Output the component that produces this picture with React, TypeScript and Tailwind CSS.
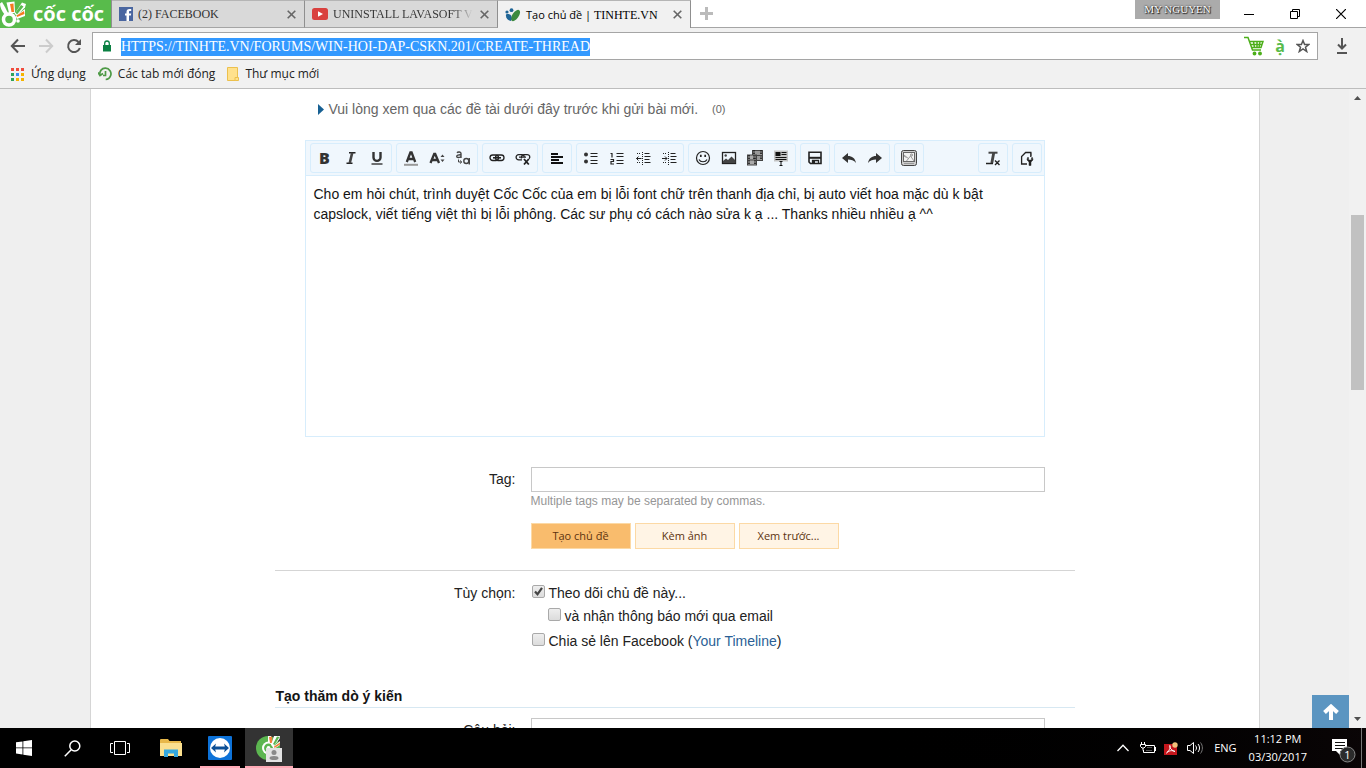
import React from 'react';

const iconProps = {
    width: 18,
    height: 18,
    viewBox: '0 0 18 18',
    fill: 'none',
    stroke: '#222',
    'aria-hidden': true,
};

const icons: Record<string, React.ReactNode> = {
    bold: <span className="font-['Open_Sans',sans-serif] text-[16px] font-extrabold">B</span>,
    italic: (
        <svg {...iconProps} strokeWidth="1.6">
            <path d="M7 3.8h6.500M4.500 14.2H10.500" />
            <path d="M10.200 3.800L7.700 14.200" stroke="#444" strokeWidth="2.600" />
        </svg>
    ),
    underline: (
        <svg {...iconProps} stroke="#333" strokeWidth="2.400">
            <path d="M5.500 3v5.400a3.500 3.500 0 0 0 7 0V3" />
            <path d="M3.500 15h11" strokeWidth="1.400" />
        </svg>
    ),
    color: (
        <svg {...iconProps} stroke="#333" strokeWidth="2.300">
            <path d="M4.800 13L8.400 3.500h1.200L13.200 13M6.300 10h5.400" />
            <path d="M2 15.800h14" stroke="#999" strokeWidth="2" />
        </svg>
    ),
    size: (
        <svg {...iconProps} stroke="#333" strokeWidth="2.300">
            <path d="M2.500 14L6.200 5h1L11 14M4 11h5.500" />
            <path d="M12.500 8L14.500 5.500 16.500 8zM12.500 10.500L14.500 13 16.500 10.500z" fill="#444" stroke="none" />
        </svg>
    ),
    family: (
        <svg {...iconProps} stroke="#444" strokeWidth="1.400">
            <path d="M3 3.700c1-1.200 4-1 4 .8V9M7 5.800C4.500 5.600 2.700 6.200 2.700 7.400S5.500 9.200 7 7.400" />
            <circle cx="12.300" cy="12" r="2.500" />
            <path d="M15.300 9v6.500" />
            <path d="M4.500 10.500v2.500h3M6 11.500L7.800 13 6 14.500" strokeWidth="1" />
        </svg>
    ),
    link: (
        <svg {...iconProps} strokeWidth="1.300">
            <rect x="2" y="6" width="8.500" height="5.500" rx="2.700" />
            <rect x="7.500" y="6" width="8.500" height="5.500" rx="2.700" />
            <path d="M5 8.800h8" strokeWidth="1.600" />
        </svg>
    ),
    unlink: (
        <svg {...iconProps} strokeWidth="1.300">
            <path d="M8 10.800H4.700a2.500 2.500 0 0 1 0-5.200h3.100a2.500 2.500 0 0 1 2.500 2.200" />
            <path d="M7.500 9.500C7 7.500 8 5.600 10 5.600h3.200c2.500 0 3.300 2.600 1.900 4.200M5 8.200h7" />
            <path d="M10 10l4.800 5.500M14.800 10L10 15.500" strokeWidth="1.800" />
        </svg>
    ),
    align: (
        <svg {...iconProps} stroke="#111" strokeWidth="2">
            <path d="M3 5h7M3 8h12M3 11h8M3 14h12" />
        </svg>
    ),
    bullets: (
        <svg {...iconProps}>
            <circle cx="4" cy="5.500" r="2" fill="#333" stroke="none" />
            <circle cx="4" cy="12.500" r="2" fill="#333" stroke="none" />
            <path d="M8.500 4.500h7M8.500 7.500h7M8.500 11.500h7M8.500 14.500h7" />
        </svg>
    ),
    numbers: (
        <svg {...iconProps}>
            <path d="M2.500 4.500h1.500v4M2.500 10.500h3v2h-2.500v2.500h3" strokeWidth="1.200" />
            <path d="M8.500 4.500h7M8.500 7.500h7M8.500 11.500h7M8.500 14.500h7" />
        </svg>
    ),
    outdent: (
        <svg {...iconProps}>
            <path d="M2.500 9.500h5M4.500 7.500l-2 2 2 2" />
            <path d="M8.500 3v13" strokeDasharray="1 1" />
            <path d="M10.500 4.500h5M10.500 7.500h6M10.500 10.500h5M10.500 13.500h6" />
            <path d="M3 4.500h4M3 13.500h4" strokeDasharray="1 1" />
        </svg>
    ),
    indent: (
        <svg {...iconProps}>
            <path d="M2 9.500h5M5 7.500l2 2-2 2" />
            <path d="M8.500 3v13" strokeDasharray="1 1" />
            <path d="M10.500 4.500h5M10.500 7.500h6M10.500 10.500h5M10.500 13.500h6" />
            <path d="M3 4.500h4M3 13.500h4" strokeDasharray="1 1" />
        </svg>
    ),
    smile: (
        <svg {...iconProps} strokeWidth="1.200">
            <circle cx="9" cy="9" r="6.500" />
            <path d="M6.800 5.800v2.200M11.200 5.800v2.200" strokeWidth="1.700" />
            <path d="M5 10.500c1.500 3 6.500 3 8 0" />
        </svg>
    ),
    image: (
        <svg {...iconProps} strokeWidth="1.300">
            <rect x="2.500" y="3.500" width="13" height="11" />
            <circle cx="5.700" cy="6.500" r="1.200" fill="#444" stroke="none" />
            <path d="M3 14v-2l3-2.500 2 1.500 3.500-3.500 4 4V14z" fill="#444" stroke="none" />
        </svg>
    ),
    media: (
        <svg {...iconProps} stroke="#444">
            <rect x="6.500" y="1.500" width="10" height="10" fill="#999" />
            <rect x="1.500" y="6" width="9" height="10" fill="#aaa" />
            <path d="M8 1v10M15 1v10M3 6v10M9 6v10" stroke="#222" strokeWidth="1.700" strokeDasharray="1.500 1" />
            <path d="M7 6.500h10M2 11h9" />
        </svg>
    ),
    quote: (
        <svg {...iconProps}>
            <path d="M2 1.500h14v11H2z" fill="#c4c4c4" stroke="none" />
            <path d="M3.500 3h5v4h-5z" fill="#111" stroke="none" />
            <path d="M9.500 3.500h5M9.500 5.500h5M3.500 8.500h11M3.500 10.500h11M9 13v3M7.500 12.500h3M7.500 16.500h3" stroke="#111" />
        </svg>
    ),
    save: (
        <svg {...iconProps} strokeWidth="1.600">
            <path d="M3 3.200h12v11.300H4.500L3 13z" />
            <path d="M3 8.800h12" strokeWidth="2" />
            <path d="M6.500 14.500V11.500h6v3" strokeWidth="1.300" />
            <path d="M6.500 11.500h2.500v3H6.500z" fill="#222" stroke="none" />
        </svg>
    ),
    undo: (
        <svg {...iconProps} stroke="none" fill="#333">
            <path d="M2 9l6-5v3c4 0 7 2 8 7-2-3-5-3.600-8-3.600V14z" />
        </svg>
    ),
    redo: (
        <svg {...iconProps} stroke="none" fill="#333">
            <path d="M16 9l-6-5v3c-4 0-7 2-8 7 2-3 5-3.600 8-3.600V14z" />
        </svg>
    ),
    gallery: (
        <svg {...iconProps} stroke="#444">
            <rect x="1.500" y="1.500" width="15" height="15" rx="2" fill="#ccc" />
            <rect x="3.500" y="3.500" width="11" height="9" fill="#f2f2f2" stroke="#666" />
            <path d="M4 7l2.500 1.500M6.500 12l4-5 3.500 5M4 6l5 4" stroke="#999" />
            <circle cx="11.500" cy="6" r="1" stroke="#888" />
            <path d="M4 14.500h10" stroke="#999" />
        </svg>
    ),
    clear: (
        <svg {...iconProps}>
            <path d="M4.500 3.700h9" stroke="#444" strokeWidth="2" />
            <path d="M9.800 3.500L7.800 14" stroke="#444" strokeWidth="2.800" />
            <path d="M2 14.500h7M11 11.500l4.500 4.500M15.500 11.500L11 16" strokeWidth="1.400" />
        </svg>
    ),
    tools: (
        <svg {...iconProps} strokeWidth="1.300">
            <path d="M9 15H3.600V7.500l4-4h5.200V8M13 3.500V7" />
            <path d="M9.500 8.500L9 11l2 2v3.500h2V13l2-2-.5-2.500-1 .2V11h-3V8.500z" fill="#222" strokeWidth=".5" />
        </svg>
    ),
};

const groups = [
    ['bold', 'italic', 'underline'],
    ['color', 'size', 'family'],
    ['link', 'unlink'],
    ['align'],
    ['bullets', 'numbers', 'outdent', 'indent'],
    ['smile', 'image', 'media', 'quote'],
    ['save'],
    ['undo', 'redo'],
    ['gallery'],
];

const ToolGroup = ({ names }: { names: string[] }) => (
    <div className="flex h-[30px] rounded-[3px] border border-[#d7edfc] px-px">
        {names.map((name) => (
            <button key={name} type="button" aria-label={name} className="flex w-[26px] items-center justify-center text-[#333]">
                {icons[name]}
            </button>
        ))}
    </div>
);

const CocCocMark = () => (
    <svg width="27" height="28" viewBox="0 0 27 28" fill="none" aria-hidden="true">
        <path d="M5 15C1.500 11 0 7 0 3.500L2 2c2 3 4 7 6.500 12z" fill="#fff" />
        <path d="M9 13L6.500 2.500 14.500 1.500 15 13z" fill="#fff" />
        <path d="M11.500 12L10 4l3.500-.5.500 8.500z" fill="#f47b20" />
        <path d="M14.500 14L22 2.500l4 1.500-1 3.500-8 8z" fill="#fff" />
        <path d="M15.500 12.500L21 5l2.500 1.500-6.500 8z" fill="#58bb4b" />
        <path d="M15.500 16L25 9v7l-8 3z" fill="#fff" />
        <path d="M16.500 15.500l7.500-4.500.5 3-7.500 3z" fill="#f47b20" />
        <circle cx="9" cy="19.500" r="5.500" fill="#58bb4b" stroke="#fff" strokeWidth="3.500" />
        <circle cx="18" cy="21" r="1.800" fill="#fff" />
    </svg>
);

const CloseIcon = () => (
    <svg width="9" height="9" viewBox="0 0 9 9" stroke="#666" strokeWidth="1.600" aria-hidden="true">
        <path d="M.7.7l7.600 7.600M8.300.7L.7 8.300" />
    </svg>
);

interface TabProps {
    icon: React.ReactNode;
    active?: boolean;
    children: React.ReactNode;
}

const Tab = ({ icon, active, children }: TabProps) => (
    <div
        className={`flex w-[193px] items-center border-r border-t border-r-[#8f8f8f] border-t-[#b5b5b5] pl-[7px] pr-2 ${
            active ? 'bg-[#f1f1f1] text-black' : 'border-b border-b-[#a5a5a5] bg-[#d9d9d9] text-[#333]'
        }`}
    >
        {icon}
        <span className="ml-[5px] min-w-0 flex-1 whitespace-nowrap">{children}</span>
        <button aria-label="Close tab" className="ml-2">
            <CloseIcon />
        </button>
    </div>
);

const TabStrip = () => (
    <div className="flex h-7 bg-white font-['Liberation_Serif',serif] text-xs">
        <button aria-label="Cốc Cốc" className="flex w-28 shrink-0 items-center border-r border-[#8f8f8f] bg-[#58bb4b] text-white">
            <CocCocMark />
            <span className="ml-[6px] font-['Open_Sans',sans-serif] text-[20px] leading-7 font-bold">cốc cốc</span>
        </button>
        <Tab
            icon={
                <svg width="14" height="14" viewBox="0 0 14 14" aria-hidden="true">
                    <path d="M0 0h14v14H0z" fill="#4a66a0" />
                    <path d="M7.500 14V8.500H6v-2h1.500V5c0-2 1-3 3-3h1.700v2H11c-.8 0-1 .4-1 1v1.500h2.200l-.3 2H10V14z" fill="#fff" />
                </svg>
            }
        >
            (2) FACEBOOK
        </Tab>
        <Tab
            icon={
                <svg width="16" height="12" viewBox="0 0 16 12" aria-hidden="true">
                    <rect width="16" height="12" rx="2.500" fill="#d9413f" />
                    <path d="M6 3.300l5 2.700-5 2.700z" fill="#fff" />
                </svg>
            }
        >
            <span className="bg-gradient-to-r from-[#333] from-85% to-[#d9d9d9] bg-clip-text text-transparent">
                UNINSTALL LAVASOFT V
            </span>
        </Tab>
        <Tab
            active
            icon={
                <svg width="16" height="14" viewBox="0 0 16 14" aria-hidden="true">
                    <ellipse cx="10.500" cy="7.500" rx="3.200" ry="6.500" transform="rotate(35 10.500 7.500)" fill="#3c8a3f" />
                    <circle cx="6.500" cy="2.200" r="1.900" fill="#1f6596" />
                    <circle cx="2" cy="4" r="1.600" fill="#1f6596" />
                    <path d="M1 6.500c2-1 5.500-.5 5.500 3L6 13C3 12.500.5 10 1 6.500z" fill="#1f6596" />
                </svg>
            }
        >
            <span className="font-['Open_Sans',sans-serif] text-[11px]">Tạo chủ đề | </span>TINHTE.VN
        </Tab>
        <div className="flex flex-1 border-b border-[#a5a5a5]">
            <button aria-label="New tab" className="ml-[9px]">
                <svg width="13" height="13" viewBox="0 0 13 13" stroke="#bbb" strokeWidth="3" aria-hidden="true">
                    <path d="M6.500 0v13M0 6.500h13" />
                </svg>
            </button>
            <div className="ml-auto h-[19px] w-[85px] bg-[#ababab] text-center text-[11px] leading-[18px] text-white [text-shadow:0_0_2px_#000,1px_1px_1px_#222]">
                MY NGUYEN
            </div>
            <div className="flex items-center gap-9 pr-5 pl-6">
                <button aria-label="Minimize">
                    <svg width="10" height="10" viewBox="0 0 10 10" stroke="#000" aria-hidden="true">
                        <path d="M0 5.500h10" />
                    </svg>
                </button>
                <button aria-label="Restore">
                    <svg width="10" height="10" viewBox="0 0 10 10" stroke="#000" fill="none" aria-hidden="true">
                        <path d="M.5 2.500h7v7h-7zM2.500 2.500v-2h7v7h-2" />
                    </svg>
                </button>
                <button aria-label="Close">
                    <svg width="10" height="10" viewBox="0 0 10 10" stroke="#000" strokeWidth="1.200" aria-hidden="true">
                        <path d="M0 0l10 10M10 0L0 10" />
                    </svg>
                </button>
            </div>
        </div>
    </div>
);

const AddressBar = () => (
    <div className="flex h-8 items-end">
        <div className="flex h-7 w-[92px] shrink-0 items-center gap-3 pl-[10px]">
            <button aria-label="Back">
                <svg width="16" height="16" viewBox="0 0 16 16" fill="none" stroke="#555" strokeWidth="2" aria-hidden="true">
                    <path d="M15 8H2.500M8 1.500L1.800 8 8 14.500" />
                </svg>
            </button>
            <button aria-label="Forward">
                <svg width="16" height="16" viewBox="0 0 16 16" fill="none" stroke="#ccc" strokeWidth="2" aria-hidden="true">
                    <path d="M1 8h12.500M8 1.500L14.200 8 8 14.500" />
                </svg>
            </button>
            <button aria-label="Reload">
                <svg width="16" height="16" viewBox="0 0 16 16" fill="none" stroke="#555" strokeWidth="2" aria-hidden="true">
                    <path d="M13.800 10A6 6 0 1 1 12.500 4" />
                    <path d="M15 1v6H9z" fill="#555" stroke="none" />
                </svg>
            </button>
        </div>
        <div className="flex h-7 min-w-0 flex-1 items-center border border-[#a5a5a5] bg-white pr-[7px] pl-[10px]">
            <svg width="8" height="12" viewBox="0 0 8 12" aria-hidden="true">
                <path d="M0 5h8v6.500H0z" fill="#0b8043" />
                <path d="M1.700 5.500V3.300a2.300 2.300 0 0 1 4.600 0v2.200" fill="none" stroke="#0b8043" strokeWidth="1.300" />
            </svg>
            <div className="ml-[10px] flex-1">
                <span className="inline-block bg-[#3399ff] font-['Liberation_Serif',serif] text-[14px] leading-[18px] text-white">
                    HTTPS://TINHTE.VN/FORUMS/WIN-HOI-DAP-CSKN.201/CREATE-THREAD
                </span>
            </div>
            <div className="flex items-center gap-[11px]">
                <button aria-label="Shopping">
                    <svg width="20" height="20" viewBox="0 0 20 20" fill="none" stroke="#4caf1a" strokeWidth="1.500" aria-hidden="true">
                        <path d="M0 1.500h4l4.500 12.500h8.500M5.500 5.500H19L17 11.500H7.500M6.500 8.500h11.500M9.500 5.500l1 6M13 5.500v6M16 5.500l-1 6" />
                        <circle cx="10.500" cy="17.500" r="1.200" fill="#4caf1a" />
                        <circle cx="16" cy="17.500" r="1.200" fill="#4caf1a" />
                    </svg>
                </button>
                <button aria-label="Vietnamese input" className="font-['Open_Sans',sans-serif] text-[16px] leading-5 font-bold text-[#58bb4b]">
                    ạ̀
                </button>
                <button aria-label="Bookmark">
                    <svg width="14" height="14" viewBox="0 0 14 14" fill="none" stroke="#555" strokeWidth="1.500" aria-hidden="true">
                        <path d="M7 1.500l1.600 4h4.200L9.500 8.200l1.200 4.300L7 10l-3.700 2.500 1.200-4.300L1.200 5.500h4.200z" />
                    </svg>
                </button>
            </div>
        </div>
        <button aria-label="Downloads" className="flex h-7 w-12 shrink-0 items-center justify-center">
            <svg width="12" height="16" viewBox="0 0 12 16" fill="none" stroke="#555" strokeWidth="2" aria-hidden="true">
                <path d="M6 0v10M2 6.500l4 4 4-4M1 15h10" />
            </svg>
        </button>
    </div>
);

const squares = ['#f04b3c', '#f04b3c', '#f04b3c', '#2fa35a', '#3b8df0', '#f5b400', '#2fa35a', '#f5b400', '#f5b400'];

const Bookmarks = () => (
    <div className="flex h-7 items-center gap-3 pl-[11px] font-['Open_Sans',sans-serif] text-xs text-[#222]">
        <button className="flex items-center">
            <span className="mr-[7px] grid grid-cols-3 gap-[2px]">
                {squares.map((color, i) => (
                    <span key={i} className="size-[3px]" style={{ backgroundColor: color }} />
                ))}
            </span>
            Ứng dụng
        </button>
        <button className="flex items-center">
            <svg className="mr-[6px]" width="14" height="14" viewBox="0 0 14 14" fill="none" stroke="#4e9a46" strokeWidth="1.700" aria-hidden="true">
                <path d="M2 8.500C1 4 4 1 7.500 1.200c4 .2 6.300 4 5.200 7.300-.8 2.500-3 3.800-5 4M7.500 4v4.500H5M0 5.500l2 3 3-2" />
            </svg>
            Các tab mới đóng
        </button>
        <button className="flex items-center">
            <svg className="mr-[6px]" width="12" height="14" viewBox="0 0 12 14" fill="#ffe18c" stroke="#ecc04d" aria-hidden="true">
                <path d="M.5.5h10v10h1v3H.5z" />
                <path d="M8 13.500v-3h3" />
            </svg>
            Thư mục mới
        </button>
    </div>
);

interface CheckProps {
    id: string;
    checked?: boolean;
    children: React.ReactNode;
}

const Check = ({ id, checked, children }: CheckProps) => (
    <div className="flex h-[22px] items-center">
        <span className="mb-1 grid">
            <input
                id={id}
                type="checkbox"
                defaultChecked={checked}
                className="peer col-start-1 row-start-1 size-[13px] appearance-none rounded-[2px] border border-[#a9a9a9] bg-gradient-to-b from-[#eee] to-[#dcdcdc]"
            />
            <svg
                className="pointer-events-none invisible col-start-1 row-start-1 peer-checked:visible"
                width="13"
                height="13"
                viewBox="0 0 13 13"
                fill="none"
                stroke="#444"
                strokeWidth="2.200"
                aria-hidden="true"
            >
                <path d="M3 6.500l2.500 2.800L10 2.800" />
            </svg>
        </span>
        <label htmlFor={id} className="ml-1">
            {children}
        </label>
    </div>
);

const formRow = 'grid grid-cols-[241px_1fr] gap-x-[15px] pr-[30px]';
const formButton = 'h-[26px] w-[100px] border border-[#fcd9a5] text-[11px] text-[#5c3310]';

const ThreadForm = () => (
    <form className="mx-auto w-full max-w-[800px] pt-[10px] text-[14px] leading-[22px] text-[#222]">
        <div className="flex h-5 items-center pl-[43px] text-[#666]">
            <svg width="6" height="11" viewBox="0 0 6 11" aria-hidden="true">
                <path d="M0 0l6 5.500L0 11z" fill="#176093" />
            </svg>
            <span className="ml-[5px]">Vui lòng xem qua các đề tài dưới đây trước khi gửi bài mới.</span>
            <span className="ml-[14px] text-[11px]">(0)</span>
        </div>
        <div className="mx-[30px] mt-[21px] border border-[#d7edfc]">
            <div className="flex h-[35px] gap-1 border-b border-[#d7edfc] bg-[#f0f7fd] pt-[2px] pr-[2px] pl-1">
                {groups.map((names) => (
                    <ToolGroup key={names[0]} names={names} />
                ))}
                <div className="ml-auto" />
                <ToolGroup names={['clear']} />
                <ToolGroup names={['tools']} />
            </div>
            <textarea
                aria-label="Nội dung"
                className="block h-[260px] w-full resize-none px-2 py-[8px] text-[14px] leading-5 text-[#141414] outline-none"
                defaultValue="Cho em hỏi chút, trình duyệt Cốc Cốc của em bị lỗi font chữ trên thanh địa chỉ, bị auto viết hoa mặc dù k bật capslock, viết tiếng việt thì bị lỗi phông. Các sư phụ có cách nào sửa k ạ ... Thanks nhiều nhiều ạ ^^"
            />
        </div>
        <div className={`${formRow} mt-[30px]`}>
            <label htmlFor="tag" className="pt-px text-right">
                Tag:
            </label>
            <div>
                <input id="tag" type="text" className="block h-[25px] w-full border border-[#c8c8c8] bg-white px-1" />
                <p className="text-xs leading-[18px] text-[#969696]">Multiple tags may be separated by commas.</p>
                <div className="mt-[13px] flex gap-1 font-['Open_Sans',sans-serif]">
                    <button type="button" className={`${formButton} bg-[#f9bc6d]`}>
                        Tạo chủ đề
                    </button>
                    <button type="button" className={`${formButton} bg-[#fff4e5]`}>
                        Kèm ảnh
                    </button>
                    <button type="button" className={`${formButton} bg-[#fff4e5]`}>
                        Xem trước...
                    </button>
                </div>
            </div>
        </div>
        <hr className="mt-[21px] border-[#d5d5d5]" />
        <div className={`${formRow} mt-[11px]`}>
            <span className="text-right">Tùy chọn:</span>
            <div className="pl-px">
                <Check id="watch" checked>
                    Theo dõi chủ đề này...
                </Check>
                <div className="mt-px pl-4">
                    <Check id="email">và nhận thông báo mới qua email</Check>
                </div>
                <div className="mt-[3px]">
                    <Check id="facebook">
                        Chia sẻ lên Facebook (
                        <a href="#timeline" className="text-[#2b5f96]">
                            Your Timeline
                        </a>
                        )
                    </Check>
                </div>
            </div>
        </div>
        <h3 className="mt-[34px] border-b border-[#d7e8f2] pl-px leading-[21px] font-bold text-[#141414]">Tạo thăm dò ý kiến</h3>
        <div className={`${formRow} mt-[10px]`}>
            <label htmlFor="question" className="pt-px text-right">
                Câu hỏi:
            </label>
            <input id="question" type="text" className="h-[25px] border border-[#c8c8c8] bg-white px-1" />
        </div>
    </form>
);

const Scrollbar = () => (
    <div className="flex w-[17px] shrink-0 flex-col items-center bg-[#f1f1f1] py-[7px]">
        <svg width="7" height="4" viewBox="0 0 7 4" fill="#505050" aria-hidden="true">
            <path d="M0 4l3.500-4L7 4z" />
        </svg>
        <div className="mt-[115px] h-[175px] w-[13px] bg-[#c1c1c1]" />
        <svg className="mt-auto" width="7" height="4" viewBox="0 0 7 4" fill="#505050" aria-hidden="true">
            <path d="M0 0l3.500 4L7 0z" />
        </svg>
    </div>
);

const Taskbar = () => (
    <footer className="flex h-10 shrink-0 bg-gradient-to-r from-black from-60% to-[#0a0506] font-['Open_Sans',sans-serif] text-[11px] text-white">
        <button aria-label="Start" className="flex w-12 items-center justify-center">
            <svg width="16" height="16" viewBox="0 0 16 16" fill="#fff" aria-hidden="true">
                <path d="M0 2.300l6.500-.9v6.100H0zM7.300 1.200L16 0v7.500H7.300zM0 8.300h6.500v6.200L0 13.600zM7.300 8.300H16V16l-8.700-1.300z" />
            </svg>
        </button>
        <button aria-label="Search" className="flex w-12 items-center justify-center">
            <svg width="17" height="17" viewBox="0 0 17 17" fill="none" stroke="#fff" strokeWidth="1.500" aria-hidden="true">
                <circle cx="10.800" cy="6" r="5" />
                <path d="M7.200 9.700L.8 16.200" />
            </svg>
        </button>
        <button aria-label="Task view" className="flex w-12 items-center justify-center">
            <svg width="20" height="14" viewBox="0 0 20 14" fill="none" stroke="#fff" aria-hidden="true">
                <path d="M4.500.5h11v13h-11zM3 2.500H.5v9H3M17 2.500h2.500v9H17" />
            </svg>
        </button>
        <button aria-label="File Explorer" className="ml-[3px] flex w-12 items-center justify-center">
            <svg width="22" height="18" viewBox="0 0 22 18" aria-hidden="true">
                <path d="M0 1q0-1 1-1h7l1.500 2H21v14H0z" fill="#e8b84a" />
                <path d="M0 4h22v13H0z" fill="#fbe08f" />
                <path d="M4 18v-7.500h14V18h-4v-3.500H8V18z" fill="#35a8e0" />
            </svg>
        </button>
        <button aria-label="TeamViewer" className="ml-px flex w-12 flex-col items-center">
            <svg className="mt-2" width="24" height="24" viewBox="0 0 24 24" aria-hidden="true">
                <rect width="24" height="24" rx="1" fill="#0d72d8" />
                <circle cx="12" cy="12" r="10" fill="#fff" />
                <path d="M3 12l5-4.500-.8 3h9.600l-.8-3 5 4.500-5 4.500.8-3H7.200l.8 3z" fill="#0c4f96" />
            </svg>
            <span className="mt-auto h-[2px] w-10 bg-[#ffa9b5]" />
        </button>
        <button aria-label="Cốc Cốc" className="ml-px flex w-12 flex-col items-center bg-[#333]">
            <svg className="mt-2" width="26" height="26" viewBox="0 0 26 26" fill="none" aria-hidden="true">
                <circle cx="12" cy="12" r="12" fill="#5cb650" />
                <circle cx="12.500" cy="12" r="6.500" fill="#fff" />
                <circle cx="12.500" cy="12" r="3.200" stroke="#5cb650" strokeWidth="2.500" />
                <path d="M12 7V0h3l1 7z" fill="#fff" />
                <path d="M14 7l-1-6 3-.5.500 6.500z" fill="#f4803a" />
                <path d="M15 9l3-9h6l-.5 3L17 11z" fill="#fff" />
                <path d="M17 8l4-7.500 2.500.5-5 8z" fill="#5cb650" />
                <path d="M17 11l7-6v4l-6 4z" fill="#fff" />
                <path d="M18 10.500l6-4v2l-5.500 3.500z" fill="#f4803a" />
                <rect x="10" y="12" width="16" height="14" fill="#e3e3e3" />
                <circle cx="18" cy="16.500" r="2.500" fill="#8a8a8a" />
                <ellipse cx="18" cy="22" rx="4.500" ry="2" fill="#8a8a8a" />
            </svg>
            <span className="mt-auto h-[2px] w-full bg-[#ffa9b5]" />
        </button>
        <div className="ml-auto flex items-center">
            <button aria-label="Show hidden icons">
                <svg width="12" height="8" viewBox="0 0 12 8" fill="none" stroke="#fff" strokeWidth="1.300" aria-hidden="true">
                    <path d="M.5 7L6 1.200 11.500 7" />
                </svg>
            </button>
            <svg className="ml-[11px]" width="16" height="12" viewBox="0 0 16 12" fill="none" stroke="#fff" aria-hidden="true">
                <path d="M6 3.500h8.500v7H3.500V8M15.500 5v4M1.500 0v2.500M4.500 0v2.500M.5 2.500h5v2l-1.500 1.500H2L.5 4.500zM3 6v2.500" />
                <path d="M7 5.500h5M6 8.500h6" stroke="#555" />
            </svg>
            <svg className="ml-2" width="14" height="13" viewBox="0 0 14 13" aria-hidden="true">
                <path d="M0 2h13v11H0z" fill="#c4161c" />
                <path d="M2.500 11C6 8 7 4 6 3.500S5.500 8 11 9.500C8 8 5 8.500 2.500 11z" fill="none" stroke="#fff" />
                <circle cx="11" cy="3" r="2.700" fill="#f1c27a" />
            </svg>
            <svg className="ml-[9px]" width="17" height="14" viewBox="0 0 17 14" fill="none" stroke="#fff" aria-hidden="true">
                <path d="M.5 4.500H3L6.500 1.500v11L3 9.500H.5zM8.500 4.500c1.300 1.500 1.300 3.500 0 5M11 3c2 2.500 2 5.500 0 8" />
                <path d="M13.500 1.500c2.500 3 2.500 8 0 11" stroke="#777" />
            </svg>
            <span className="ml-[10px]">ENG</span>
            <div className="ml-3 text-center leading-[18px]">
                <div>11:12 PM</div>
                <div>03/30/2017</div>
            </div>
            <button aria-label="Notifications" className="mt-1 ml-6">
                <svg width="25" height="25" viewBox="0 0 25 25" aria-hidden="true">
                    <path d="M1 1h15v12H9v4l-4-4H1z" fill="#fff" />
                    <path d="M4 4.500h10M4 7.500h10M4 10.500h8" stroke="#111" />
                    <circle cx="16.500" cy="16.500" r="7.500" fill="#2b2b2b" stroke="#888" />
                    <text x="16.500" y="20.500" textAnchor="middle" fontSize="11" fill="#fff">
                        1
                    </text>
                </svg>
            </button>
            <span className="ml-[5px] h-10 w-[5px] border-l border-[#777]" />
        </div>
    </footer>
);

export default function App() {
    return (
        <div className="flex h-screen flex-col overflow-hidden font-['Liberation_Sans',Arial,sans-serif]">
            <header className="shrink-0 border-b border-[#bdbdbd] bg-[#f1f1f1]">
                <TabStrip />
                <AddressBar />
                <Bookmarks />
            </header>
            <div className="flex min-h-0 flex-1">
                <main className="relative min-w-0 flex-1 overflow-hidden bg-[#efefef]">
                    <div className="mx-auto min-h-full max-w-[1170px] border-x border-[#d5d5d5] bg-white">
                        <ThreadForm />
                    </div>
                    <button
                        aria-label="Back to top"
                        className="absolute right-0 bottom-0 flex h-[33px] w-[37px] items-center justify-center bg-[#5b95c1]"
                    >
                        <svg width="16" height="16" viewBox="0 0 16 16" fill="none" stroke="#fff" strokeWidth="4" aria-hidden="true">
                            <path d="M8 16V3M1.500 8.500L8 2.500l6.500 6" />
                        </svg>
                    </button>
                </main>
                <Scrollbar />
            </div>
            <Taskbar />
        </div>
    );
}
